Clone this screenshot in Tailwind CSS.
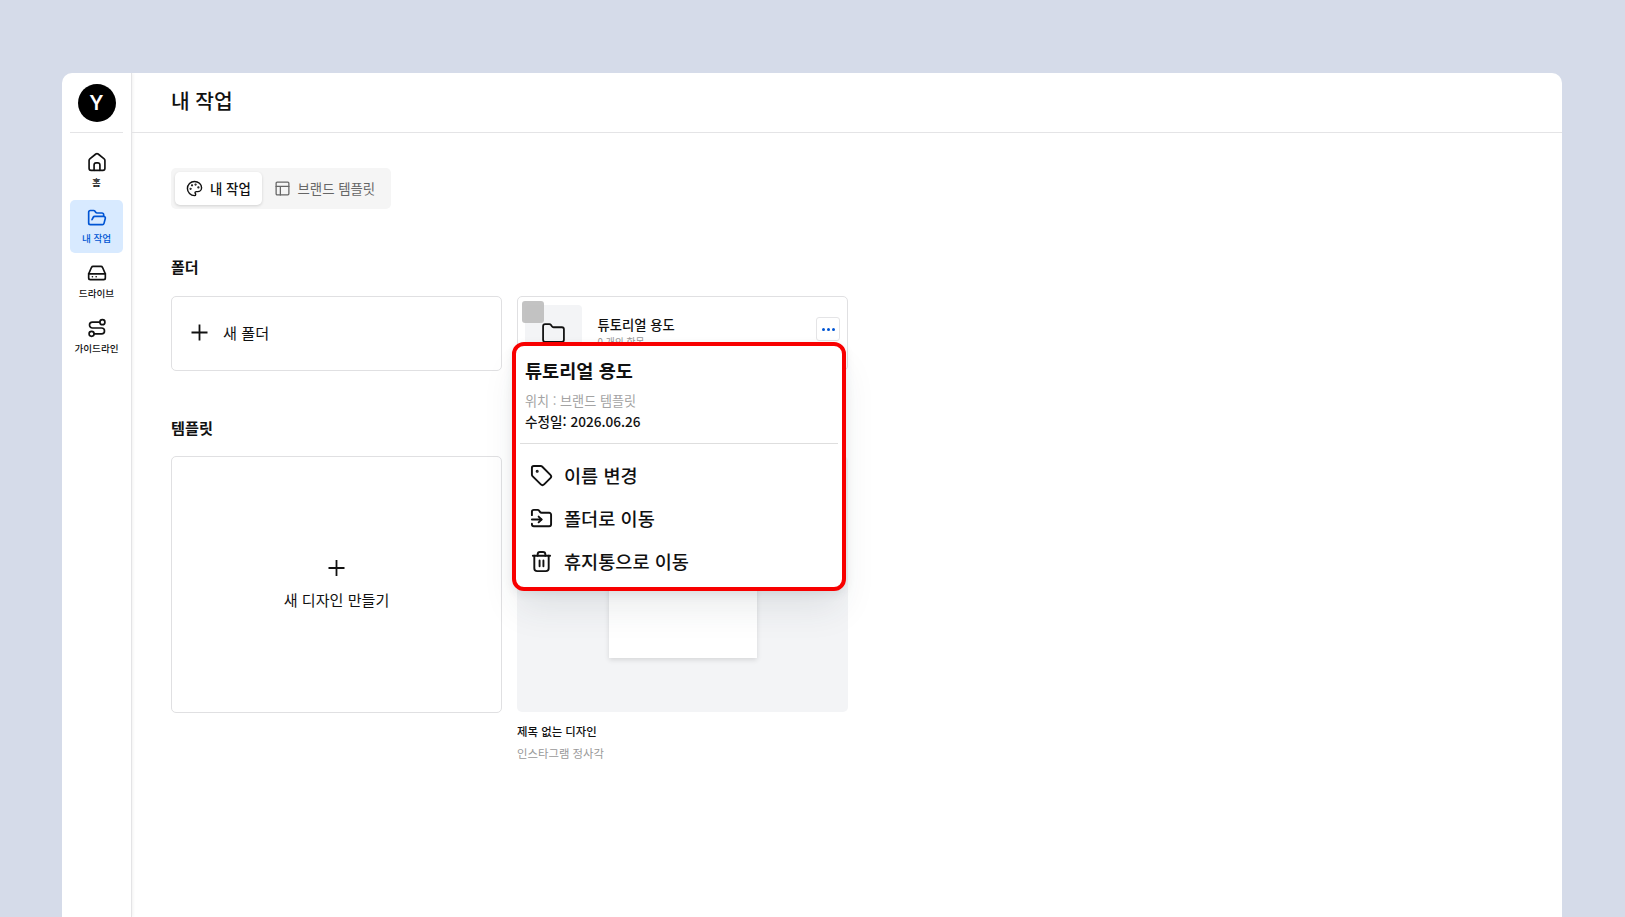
<!DOCTYPE html>
<html lang="ko">
<head>
    <meta charset="UTF-8">
    <meta name="viewport" content="width=device-width, initial-scale=1.0">
    <title>내 작업</title>
    <script src="https://cdn.jsdelivr.net/npm/@tailwindcss/browser@4"></script>
</head>
<body class="bg-[#d5dbe9] h-screen overflow-hidden pt-[73px] pl-[62px] font-['Noto_Sans_CJK_KR',sans-serif] text-[#111]">
    <div class="flex w-[1500px] h-[844px] bg-white rounded-t-[10px] overflow-hidden">

        <!-- Sidebar -->
        <aside class="w-[70px] shrink-0 border-r border-[#e4e4e6] shadow-[1px_0_3px_rgba(0,0,0,0.06)] px-2 pt-[11px] flex flex-col items-center">
            <div class="w-[38px] h-[38px] rounded-full bg-black text-white text-[20px] font-semibold font-['Inter',sans-serif] flex items-center justify-center">Y</div>
            <div class="w-full border-b border-[#e4e4e6] mt-[10px] mb-[11px]"></div>
            <nav class="w-full flex flex-col gap-[2px] text-[9.6px] leading-[14px] font-medium text-center whitespace-nowrap">
                <a class="h-[53.5px] pt-[8px] flex flex-col items-center gap-[3px]">
                    <svg class="w-[20px] h-[20px]" viewBox="0 0 24 24" fill="none" stroke="currentColor" stroke-width="2" stroke-linecap="round" stroke-linejoin="round"><path d="M2.500 10.200a2.500 2.500 0 0 1 .9-1.900l7.200-5.900a2.200 2.200 0 0 1 2.800 0l7.200 5.900a2.500 2.500 0 0 1 .9 1.900V19.500a2.500 2.500 0 0 1-2.500 2.500H5a2.500 2.500 0 0 1-2.500-2.500z"/><path d="M8.500 22v-6.500a2.500 2.500 0 0 1 2.500-2.500h2a2.500 2.500 0 0 1 2.500 2.500V22"/></svg>
                    <span>홈</span>
                </a>
                <a class="h-[53.5px] pt-[8px] flex flex-col items-center gap-[3px] rounded-[5px] bg-[#d8eaff] text-[#0055d4]">
                    <svg class="w-[20px] h-[20px]" viewBox="0 0 24 24" fill="none" stroke="currentColor" stroke-width="2" stroke-linecap="round" stroke-linejoin="round"><path d="m6 14 1.5-2.9A2 2 0 0 1 9.24 10H20a2 2 0 0 1 1.94 2.5l-1.54 6a2 2 0 0 1-1.95 1.5H4a2 2 0 0 1-2-2V5a2 2 0 0 1 2-2h3.9a2 2 0 0 1 1.69.9l.81 1.2a2 2 0 0 0 1.67.9H18a2 2 0 0 1 2 2v2"/></svg>
                    <span>내 작업</span>
                </a>
                <a class="h-[53.5px] pt-[8px] flex flex-col items-center gap-[3px]">
                    <svg class="w-[20px] h-[20px]" viewBox="0 0 24 24" fill="none" stroke="currentColor" stroke-width="2" stroke-linecap="round" stroke-linejoin="round"><path d="M22 13H2"/><path d="M5.45 5.11 2 13v5a2 2 0 0 0 2 2h16a2 2 0 0 0 2-2v-5l-3.45-7.89A2 2 0 0 0 16.76 4H7.24a2 2 0 0 0-1.79 1.11z"/><path d="M6.500 16.500h.01M11 16.500h.01"/></svg>
                    <span>드라이브</span>
                </a>
                <a class="h-[53.5px] pt-[7px] flex flex-col items-center gap-[3px]">
                    <svg class="w-[20px] h-[20px]" viewBox="0 0 24 24" fill="none" stroke="currentColor" stroke-width="2" stroke-linecap="round" stroke-linejoin="round"><circle cx="5.5" cy="19" r="3"/><path d="M8.5 19h9a3.5 3.5 0 0 0 0-7h-11a3.5 3.5 0 0 1 0-7H15"/><circle cx="18.5" cy="5" r="3"/></svg>
                    <span>가이드라인</span>
                </a>
            </nav>
        </aside>

        <div class="flex-1">
            <!-- Header -->
            <header class="h-[60px] border-b border-[#e4e4e6] pl-[39px] pb-1 flex items-center">
                <h1 class="text-[20.3px] font-medium">내 작업</h1>
            </header>

            <main class="pl-[39px] pt-[35px]">
                <!-- Tabs -->
                <div class="w-[220px] h-[41px] p-1 rounded-[5px] bg-[#f5f5f5] flex text-[13.4px] whitespace-nowrap">
                    <button class="w-[87px] pl-[11px] flex items-center gap-[7px] rounded-[5px] bg-white shadow-[0_1px_3px_rgba(0,0,0,0.15)] font-medium">
                        <svg class="w-[17px] h-[17px]" viewBox="0 0 24 24" fill="none" stroke="currentColor" stroke-width="2" stroke-linecap="round" stroke-linejoin="round"><circle cx="13.5" cy="6.5" r=".6" fill="currentColor"/><circle cx="17.5" cy="10.5" r=".6" fill="currentColor"/><circle cx="8.5" cy="7.5" r=".6" fill="currentColor"/><circle cx="6.5" cy="12.5" r=".6" fill="currentColor"/><path d="M12 2C6.5 2 2 6.5 2 12s4.5 10 10 10c.926 0 1.648-.746 1.648-1.688 0-.437-.18-.835-.437-1.125-.29-.289-.438-.652-.438-1.125a1.64 1.64 0 0 1 1.668-1.668h1.996c3.051 0 5.555-2.503 5.555-5.554C21.965 6.012 17.461 2 12 2z"/></svg>
                        <span>내 작업</span>
                    </button>
                    <button class="pl-[11.5px] flex items-center gap-[7px] text-[#666]">
                        <svg class="w-[17px] h-[17px]" viewBox="0 0 24 24" fill="none" stroke="currentColor" stroke-width="1.8" stroke-linecap="round" stroke-linejoin="round"><rect x="3" y="3" width="18" height="18" rx="1.5"/><path d="M3 9h18M9 21V9"/></svg>
                        <span>브랜드 템플릿</span>
                    </button>
                </div>

                <!-- Folders -->
                <h2 class="mt-[47.5px] text-[15px] leading-[20px] font-bold">폴더</h2>
                <div class="mt-[19.5px] flex gap-[15px]">
                    <div class="w-[331px] h-[75px] pl-[17px] pb-px border border-[#e0e0e2] rounded-[5px] flex items-center gap-[12px] text-[15.2px]">
                        <svg class="w-[22px] h-[22px]" viewBox="0 0 22 22" fill="none" stroke="currentColor" stroke-width="1.8"><path d="M10.500 2.500v16M2.500 10.500h16"/></svg>
                        <span class="-mt-[2px]">새 폴더</span>
                    </div>
                    <div class="relative w-[331px] h-[75px] border border-[#e0e0e2] rounded-[5px] pl-[7px] pt-[8px] pr-[7px] flex">
                        <div class="w-[57px] h-[56px] rounded bg-[#f3f4f6] flex items-center justify-center">
                            <svg class="w-[25px] h-[25px]" viewBox="0 0 24 24" fill="none" stroke="currentColor" stroke-width="1.7" stroke-linecap="round" stroke-linejoin="round"><path d="M20 20a2 2 0 0 0 2-2V8a2 2 0 0 0-2-2h-7.9a2 2 0 0 1-1.69-.9L9.6 3.9A2 2 0 0 0 7.93 3H4a2 2 0 0 0-2 2v13a2 2 0 0 0 2 2Z"/></svg>
                        </div>
                        <div class="ml-[15.5px] pt-[10px]">
                            <p class="text-[13.3px] leading-[20px] font-medium">튜토리얼 용도</p>
                            <p class="text-[9.8px] leading-[14px] text-[#999]">0 개의 항목</p>
                        </div>
                        <button class="ml-auto mt-[12px] w-6 h-6 rounded-[3px] border border-[#e4e4e6] flex items-center justify-center gap-[2px]">
                            <i class="w-[3px] h-[3px] rounded-full bg-[#0055d4]"></i>
                            <i class="w-[3px] h-[3px] rounded-full bg-[#0055d4]"></i>
                            <i class="w-[3px] h-[3px] rounded-full bg-[#0055d4]"></i>
                        </button>
                        <!-- Checkbox -->
                        <div class="absolute left-1 top-1 w-[22px] h-[22px] rounded-[3px] bg-[#bdbdbd]/90"></div>

                        <!-- Context menu -->
                        <div class="absolute z-10 left-[-6px] top-[45px] w-[334px] h-[249px] bg-white border-4 border-[#f80000] rounded-xl shadow-[0_22px_36px_-6px_rgba(40,60,70,0.1),0_3px_10px_rgba(40,60,70,0.09)]">
                            <div class="mx-[4px] h-[98px] border-b border-[#dedede] pt-[11px] pl-[5px]">
                                <h3 class="text-[18.6px] leading-[26px] font-bold">튜토리얼 용도</h3>
                                <p class="mt-[7px] text-[13.1px] leading-[21px] text-[#a3a3a3]">위치 : 브랜드 템플릿</p>
                                <p class="text-[13.6px] leading-[21px] font-medium">수정일: 2026.06.26</p>
                            </div>
                            <ul class="pl-[14px] pt-[10px] text-[18.6px] font-medium">
                                <li class="h-[43px] flex items-center gap-[11px]">
                                    <svg class="w-[23px] h-[23px]" viewBox="0 0 24 24" fill="none" stroke="currentColor" stroke-width="2" stroke-linecap="round" stroke-linejoin="round"><path d="M12.586 2.586A2 2 0 0 0 11.172 2H4a2 2 0 0 0-2 2v7.172a2 2 0 0 0 .586 1.414l8.704 8.704a2.426 2.426 0 0 0 3.42 0l6.58-6.58a2.426 2.426 0 0 0 0-3.42z"/><circle cx="7.5" cy="7.5" r=".6" fill="currentColor"/></svg>
                                    <span class="-mt-[2px]">이름 변경</span>
                                </li>
                                <li class="h-[43px] flex items-center gap-[11px]">
                                    <svg class="w-[23px] h-[23px]" viewBox="0 0 24 24" fill="none" stroke="currentColor" stroke-width="2" stroke-linecap="round" stroke-linejoin="round"><path d="M2 8.500V5a2 2 0 0 1 2-2h3.9a2 2 0 0 1 1.69.9l.81 1.2a2 2 0 0 0 1.67.9H20a2 2 0 0 1 2 2v10a2 2 0 0 1-2 2H4a2 2 0 0 1-2-2v-.5"/><path d="M2 13h10"/><path d="m9 16 3-3-3-3"/></svg>
                                    <span class="-mt-[2px]">폴더로 이동</span>
                                </li>
                                <li class="h-[43px] flex items-center gap-[11px]">
                                    <svg class="w-[23px] h-[23px]" viewBox="0 0 24 24" fill="none" stroke="currentColor" stroke-width="2" stroke-linecap="round" stroke-linejoin="round"><path d="M3 6h18"/><path d="M19.500 6v13a3 3 0 0 1-3 3h-9a3 3 0 0 1-3-3V6"/><path d="M8 6V4.500a2.500 2.500 0 0 1 2.500-2.500h3a2.500 2.500 0 0 1 2.500 2.500V6"/><path d="M10 11v6M14 11v6"/></svg>
                                    <span class="-mt-[2px]">휴지통으로 이동</span>
                                </li>
                            </ul>
                        </div>
                    </div>
                </div>

                <!-- Templates -->
                <h2 class="mt-[46px] text-[15.2px] leading-[20px] font-bold">템플릿</h2>
                <div class="mt-[19px] flex gap-[15px]">
                    <div class="w-[331px] h-[257px] pb-[2px] border border-[#e0e0e2] rounded-[5px] flex flex-col items-center justify-center gap-[8px] text-[15.1px] leading-[24px]">
                        <svg class="w-[22px] h-[22px]" viewBox="0 0 22 22" fill="none" stroke="currentColor" stroke-width="1.8"><path d="M10.500 3v16M2.500 11h16"/></svg>
                        <span>새 디자인 만들기</span>
                    </div>
                    <div class="w-[331px]">
                        <div class="h-[256px] rounded-[5px] bg-[#f3f4f6] flex items-center justify-center">
                            <div class="w-[148px] h-[148px] bg-white shadow-[0_2px_5px_rgba(0,0,0,0.12)]"></div>
                        </div>
                        <p class="mt-[8px] text-[11.4px] leading-[22px] font-medium">제목 없는 디자인</p>
                        <p class="text-[11.4px] leading-[22px] text-[#999]">인스타그램 정사각</p>
                    </div>
                </div>
            </main>
        </div>
    </div>
</body>
</html>
